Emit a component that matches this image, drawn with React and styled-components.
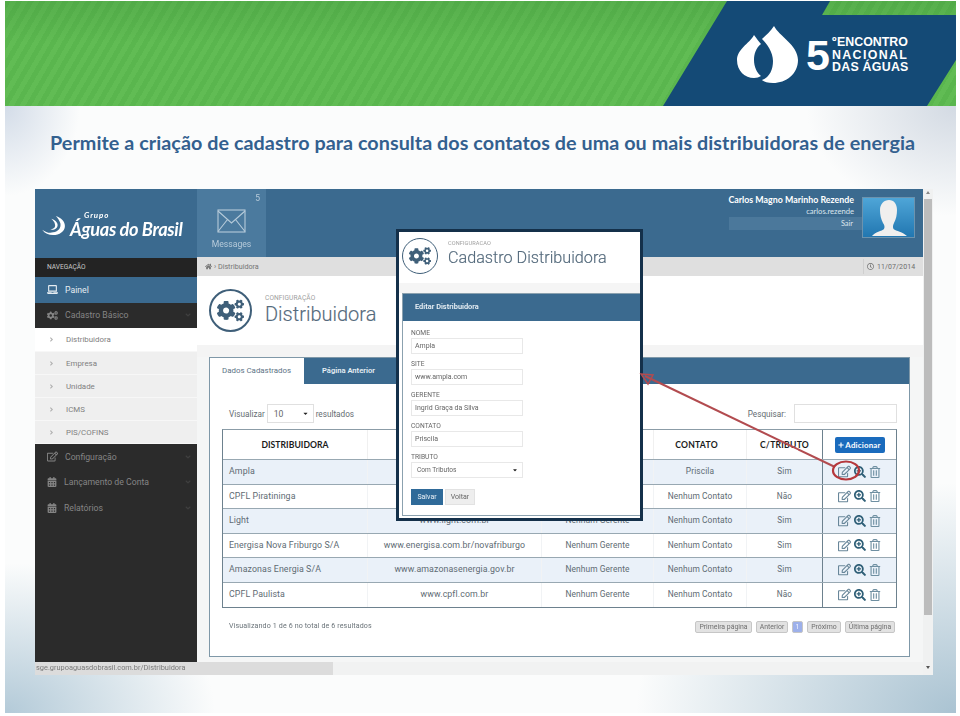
import React from "react";
import styled, { createGlobalStyle } from "styled-components";
import { FaLaptop, FaCogs, FaRegEdit, FaCalendarAlt, FaHome, FaRegClock, FaSearchPlus, FaRegTrashAlt, FaAngleRight, FaAngleDown, FaCaretDown, FaPlus } from "react-icons/fa";

const Global = createGlobalStyle`
  html, body { margin: 0; padding: 0; background: #fff; }
  * { box-sizing: border-box; }
  body { font-family: "Roboto", "Liberation Sans", sans-serif; width: 960px; height: 716px; overflow: hidden; }
`;

const Slide = styled.div`
  position: relative;
  margin: 1px 0 0 5px;
  width: 951px;
  height: 712px;
  display: flex;
  flex-direction: column;
  background:
    radial-gradient(ellipse 75px 90px at 0 105px, #d3dce8, rgba(211,220,232,0) 100%),
    radial-gradient(ellipse 150px 110px at 100% 105px, #d3dae3, rgba(211,218,227,0) 100%),
    radial-gradient(ellipse 210px 150px at 0 100%, #b3cad8, rgba(179,202,216,0) 100%),
    radial-gradient(ellipse 320px 230px at 100% 100%, #aac3d2, rgba(170,195,210,0) 100%),
    #fbfcfc;
`;
const Banner = styled.div`
  position: relative;
  height: 105px;
  flex: none;
  background:
    linear-gradient(180deg, rgba(50,130,50,.22), rgba(50,130,50,0) 40%),
    repeating-linear-gradient(120deg, #5ab64e 0 5px, #61bc54 5px 10px);
`;
const BlueShape = styled.div`
  position: absolute;
  inset: 0;
  background: #144a76;
  clip-path: polygon(722px 0, 825px 0, 817px 14px, 951px 14px, 951px 59px, 922px 105px, 658px 105px);
`;
const LogoRow = styled.div`
  position: absolute;
  left: 732px;
  top: 24px;
  display: flex;
  align-items: center;
`;
const Five = styled.span`
  font: 700 43px/44px "Liberation Sans", sans-serif;
  color: #fff;
  margin-left: 7px;
  width: 24px;
  letter-spacing: -1px;
`;
const LogoLines = styled.div`
  margin-left: 2px;
  display: flex;
  flex-direction: column;
  color: #fff;
  font: 700 12.4px/12.5px "Liberation Sans", sans-serif;
`;
const LogoLine = styled.span`
  letter-spacing: ${p => p.$sp || 0}px;
  word-spacing: ${p => p.$ws || 0}px;
  white-space: nowrap;
`;
const TitleBlock = styled.div`
  height: 83px;
  flex: none;
  padding: 25px 0 0 45px;
`;
const Title = styled.h1`
  margin: 0;
  font: 700 19.75px/24px "Lato", sans-serif;
  color: #33608f;
  white-space: nowrap;
  letter-spacing: .05px;
`;
const Shot = styled.div`
  position: relative;
  margin-left: 30px;
  width: 898px;
  height: 486px;
  display: flex;
  filter: blur(.35px);
`;
const ShotLeft = styled.div`
  width: 888px;
  display: flex;
  flex-direction: column;
`;
const ShotRow = styled.div`
  height: 473px;
  display: flex;
`;
const StatusBar = styled.div`
  height: 13px;
  background: #f1f2f2;
`;
const StatusText = styled.div`
  width: 298px;
  height: 13px;
  background: #dcdcdc;
  color: #7a7a7a;
  font-size: 7.4px;
  line-height: 12px;
  padding-left: 1px;
`;
const Scroll = styled.div`
  width: 10px;
  background: #f0f1f1;
  display: flex;
  flex-direction: column;
  align-items: center;
  justify-content: space-between;
  padding: 2px 0 0;
`;
const ScrollThumb = styled.div`
  width: 8px;
  height: 416px;
  margin-top: 5px;
  background: #bcbcbc;
`;
const ScrollArrow = styled.div`
  width: 0;
  height: 0;
  border-left: 2.5px solid transparent;
  border-right: 2.5px solid transparent;
  ${p => p.$down ? "border-top: 3px solid #555;" : "border-bottom: 3px solid #888;"}
`;
const ScrollTrack = styled.div`
  flex: 1;
  display: flex;
  flex-direction: column;
  align-items: center;
`;
const ScrollEnd = styled.div`
  height: 9px;
`;

const Sidebar = styled.aside`
  width: 162px;
  flex: none;
  background: #2b2b2b;
  display: flex;
  flex-direction: column;
`;
const Brand = styled.div`
  height: 69px;
  background: #3b6a8f;
  display: flex;
  align-items: center;
  padding: 5px 0 0 7px;
`;
const BrandText = styled.div`
  position: relative;
  margin: -2px 0 0 4px;
  color: #fff;
  font: italic 700 18.2px/16px "Lato", sans-serif;
  letter-spacing: -.35px;
  white-space: nowrap;
  padding-top: 8px;
`;
const BrandSmall = styled.span`
  position: absolute;
  left: 14px;
  top: -1px;
  font: italic 700 7.9px/7px "Lato", sans-serif;
  letter-spacing: .9px;
`;
const NavHead = styled.div`
  height: 19px;
  background: #232323;
  color: #c9c9c9;
  font-size: 6.6px;
  line-height: 19px;
  padding-left: 12px;
`;
const NavItem = styled.div`
  height: ${p => p.$h || 25.5}px;
  display: flex;
  align-items: center;
  padding: 0 5px 0 12px;
  gap: 7px;
  font-size: 8.7px;
  background: ${p => p.$active ? "#3b6a8f" : "transparent"};
  color: ${p => p.$active ? "#e6edf2" : "#858585"};
  svg { flex: none; }
`;
const NavLabel = styled.span`
  flex: 1;
`;
const Chev = styled(FaAngleDown)`
  color: #3f3f3f;
`;
const SubItem = styled.div`
  height: ${p => p.$h || 23}px;
  display: flex;
  align-items: center;
  padding-left: 13px;
  gap: 11px;
  font-size: 7.9px;
  color: #808080;
  background: ${p => p.$active ? "#fff" : "#efefef"};
  border-bottom: 1px solid #f7f7f7;
  svg { color: #b0b0b0; }
`;

const Content = styled.main`
  width: 726px;
  flex: none;
  display: flex;
  flex-direction: column;
  background: #f5f6f6;
`;
const TopBar = styled.div`
  height: 69px;
  background: #3b6a8f;
  display: flex;
`;
const Messages = styled.div`
  width: 69px;
  background: #4b7a9e;
  display: flex;
  flex-direction: column;
  align-items: center;
  color: #b7cbda;
  position: relative;
  padding-top: 20px;
`;
const MsgCount = styled.span`
  position: absolute;
  right: 6px;
  top: 4px;
  font-size: 8.5px;
`;
const MsgLabel = styled.span`
  font-size: 8.6px;
  margin-top: 6px;
`;
const UserArea = styled.div`
  flex: 1;
  display: flex;
  justify-content: flex-end;
  padding: 8px 8px 0 0;
  gap: 8px;
`;
const UserInfo = styled.div`
  width: 125px;
  margin-top: -2px;
  display: flex;
  flex-direction: column;
  align-items: flex-end;
  color: #fff;
`;
const UserName = styled.div`
  font: 700 8.85px/10px "Lato", sans-serif;
  white-space: nowrap;
  margin-bottom: 1px;
`;
const UserLogin = styled.div`
  font: 400 7.6px/11px "Lato", sans-serif;
  color: #dbe6ee;
`;
const SignOut = styled.div`
  width: 133px;
  height: 13px;
  margin: 0 -8px 0 0;
  padding-right: 9px;
  align-self: flex-end;
  background: #4b789b;
  text-align: right;
  font: 400 7.4px/13px "Lato", sans-serif;
  color: #dbe6ee;
`;
const Crumbs = styled.div`
  height: 19px;
  background: #dfdfdf;
  display: flex;
  align-items: center;
  padding-left: 8px;
  color: #757575;
  font-size: 7.2px;
  gap: 2px;
`;
const CrumbText = styled.span`
  flex: 1;
`;
const DateBox = styled.div`
  width: 60px;
  height: 15px;
  border-left: 1px solid #cfcfcf;
  display: flex;
  align-items: center;
  padding-left: 3px;
  gap: 3px;
  font-size: 7px;
  letter-spacing: .1px;
  color: #6d6d6d;
`;
const Head = styled.div`
  height: ${p => p.$h}px;
  background: #fff;
  display: flex;
  align-items: ${p => p.$small ? "flex-start" : "center"};
  padding: ${p => p.$small ? "6px 0 0 3px" : "0 0 0 12px"};
  gap: ${p => p.$small ? 10 : 13}px;
  flex: none;
`;
const Badge = styled.div`
  width: ${p => p.$s}px;
  height: ${p => p.$s}px;
  flex: none;
  border-radius: 50%;
  border: ${p => p.$s > 40 ? 2 : 1.5}px solid #3f5f79;
  display: flex;
  align-items: center;
  justify-content: center;
  color: #3f5f79;
`;
const HeadKicker = styled.div`
  font-size: ${p => p.$small ? 5.6 : 6.6}px;
  line-height: 8px;
  color: #a0a0a0;
  letter-spacing: .1px;
`;
const HeadTitle = styled.div`
  font-weight: 300;
  font-size: ${p => p.$small ? 16.2 : 20}px;
  line-height: ${p => p.$small ? 18 : 25}px;
  color: #546a7c;
  margin-top: ${p => p.$small ? 2 : 0}px;
  white-space: nowrap;
  -webkit-text-stroke: .15px #546a7c;
`;
const HeadText = styled.div`
  margin-top: ${p => p.$small ? 1 : 0}px;
`;
const Band = styled.div`
  height: 12px;
  flex: none;
  background: #f4f4f4;
`;
const PanelWrap = styled.div`
  flex: 1;
  padding: 0 13px 5px 12px;
`;
const Panel = styled.section`
  height: 300px;
  background: #fff;
  border: 1px solid #7f98a8;
  display: flex;
  flex-direction: column;
`;
const Tabs = styled.div`
  height: 26px;
  background: #3b6a8f;
  display: flex;
  flex: none;
`;
const Tab = styled.div`
  width: ${p => p.$w}px;
  background: ${p => p.$active ? "#fff" : "transparent"};
  color: ${p => p.$active ? "#5c7385" : "#e6eef4"};
  font-weight: ${p => p.$active ? 400 : 600};
  font-size: ${p => p.$active ? 7.9 : 7.6}px;
  line-height: 25px;
  text-align: ${p => p.$active ? "left" : "center"};
  padding-left: ${p => p.$active ? 12 : 0}px;
`;
const Controls = styled.div`
  height: 45px;
  flex: none;
  display: flex;
  align-items: flex-end;
  padding: 0 12px 6px 19px;
  color: #656d72;
  font-size: 8.2px;
`;
const Ctl = styled.div`
  display: flex;
  align-items: center;
  gap: 2px;
  flex: 1;
`;
const SelectBox = styled.div`
  width: ${p => p.$w}px;
  height: ${p => p.$h || 19}px;
  border: 1px solid ${p => p.$light ? "#e8e8e8" : "#e0e0e0"};
  background: #fff;
  display: flex;
  align-items: center;
  justify-content: space-between;
  padding: ${p => p.$pad || "0 4px 0 6px"};
  font-size: ${p => p.$fs || 8.6}px;
  color: #666;
  white-space: nowrap;
  svg { color: #222; }
`;
const SearchField = styled.div`
  display: flex;
  align-items: center;
  gap: 8px;
`;
const Table = styled.div`
  margin-left: 12px;
  width: 675px;
  border: 1px solid #6d818e;
  border-top-color: #8b9ca7;
  flex: none;
`;
const TRow = styled.div`
  display: grid;
  grid-template-columns: 145px 174px 112px 93px 76px 1fr;
  height: ${p => p.$h || 24.5}px;
  background: ${p => p.$alt ? "#eaf1f9" : "#fff"};
  border-bottom: ${p => p.$last ? 0 : 1.5}px solid #98a8b2;
`;
const Th = styled.div`
  display: flex;
  align-items: center;
  justify-content: center;
  padding-right: ${p => p.$pr || 0}px;
  font: 700 8.6px "Lato", sans-serif;
  letter-spacing: ${p => p.$sp ?? .05}px;
  color: #1b1b1b;
  border-right: 1px solid #f0f0f0;
`;
const Td = styled.div`
  display: flex;
  align-items: center;
  justify-content: ${p => p.$left ? "flex-start" : "center"};
  padding: 0 0 1.5px ${p => p.$left ? 6 : 0}px;
  font-size: ${p => p.$fs || 8.8}px;
  color: #606b73;
  letter-spacing: .1px;
  border-right: 1px solid #f1f3f5;
  white-space: nowrap;
`;
const ActionCell = styled.div`
  display: flex;
  align-items: center;
  justify-content: center;
  gap: 3px;
  border-left: 1px solid #6d818e;
  margin-left: -1px;
`;
const Tone = styled.span`
  display: flex;
  color: ${p => p.$c};
`;
const AddButton = styled.div`
  height: 16px;
  width: 50px;
  background: #1a6bbd;
  border-radius: 2px;
  color: #fff;
  font: 700 7.9px/16px "Lato", sans-serif;
  display: flex;
  align-items: center;
  justify-content: center;
  gap: 1px;
  letter-spacing: .2px;
`;
const Footer = styled.div`
  flex: 1;
  display: flex;
  justify-content: space-between;
  align-items: flex-start;
  padding: 13px 14px 0 19px;
  font-size: 7.1px;
  color: #6a7379;
  letter-spacing: .12px;
`;
const Pager = styled.div`
  display: flex;
  gap: 4px;
`;
const PageBtn = styled.div`
  width: ${p => p.$w}px;
  height: 12px;
  border: 1px solid #c6c6c6;
  border-radius: 2px;
  background: ${p => p.$on ? "#9db0ea" : "#e2e2e2"};
  color: ${p => p.$on ? "#f4f6ff" : "#6f6f6f"};
  font-size: 6.9px;
  line-height: 10px;
  text-align: center;
  letter-spacing: 0;
`;
const Modal = styled.div`
  position: absolute;
  left: 361px;
  top: 40px;
  width: 247px;
  height: 292px;
  background: #fff;
  border: 3px solid #14304a;
  display: flex;
  flex-direction: column;
`;
const ModalBand = styled.div`
  height: 10px;
  background: #f5f5f5;
  flex: none;
`;
const ModalPanel = styled.div`
  margin: 0 0 2px 3px;
  flex: 1;
  border: 1px solid #8ba1af;
  border-right: 0;
`;
const ModalHead = styled.div`
  height: 27px;
  background: #3b6a8f;
  color: #eaf1f6;
  font-weight: 600;
  font-size: 7.4px;
  line-height: 26px;
  padding-left: 12px;
`;
const ModalBody = styled.div`
  padding: 8px 0 0 8px;
  display: flex;
  flex-direction: column;
`;
const Label = styled.div`
  font-size: 6.7px;
  line-height: 8px;
  color: #666;
  margin: ${p => p.$first ? 0 : 6}px 0 1px;
`;
const Buttons = styled.div`
  display: flex;
  gap: 2px;
  margin-top: 11px;
`;
const Btn = styled.div`
  width: ${p => p.$w}px;
  height: 16px;
  background: ${p => p.$primary ? "#2f6a99" : "#eeeeee"};
  border: 1px solid ${p => p.$primary ? "#2f6a99" : "#e2e2e2"};
  color: ${p => p.$primary ? "#e9f0f6" : "#666"};
  font-size: 7px;
  line-height: 14px;
  text-align: center;
`;
const Annot = styled.svg`
  position: absolute;
  left: 0;
  top: 0;
  width: 898px;
  height: 486px;
  pointer-events: none;
`;

function Drops() {
  return (
    <svg width="62" height="60" viewBox="737 24 62 60" fill="#fff">
      <path d="M774 25C779 35 798 44 798 59C798 73 786 82 773 82C768 82 764 81 762 79C770 76 773 68 773 60C773 51 767 43 762 38C766 34 771 30 774 25Z" />
      <path d="M754 34C757 38 759 41 761 43C756 47 754 53 754 59C754 66 757 72 761 75C759 76 757 77 754 77C745 77 737 70 737 59C737 48 749 43 754 34Z" />
    </svg>
  );
}
function Swoosh() {
  return (
    <svg width="24" height="20" viewBox="0 0 26 22" fill="#fff">
      <path d="M15 0C21 2 25 6 25 11C25 17 19 21 12 21C7 21 3 19 0 15C4 18 8 19 12 18C18 17 21 13 20 8C19 5 17 2 15 0Z" />
      <path d="M10 3C14 4 17 7 17 10C17 14 13 16 9 15C13 14 15 12 14 9C14 7 12 5 10 3Z" />
    </svg>
  );
}
function Envelope() {
  return (
    <svg width="29" height="24" viewBox="0 0 29 24" fill="none" stroke="currentColor" strokeWidth="1.1">
      <rect x="1" y="1" width="27" height="22" />
      <path d="M1 2L14.500 14L28 2M1 22.500L10.500 10.500M28 22.500L18.500 10.500" />
    </svg>
  );
}
function Avatar() {
  return (
    <svg width="53" height="41" viewBox="0 0 53 41">
      <defs>
        <linearGradient id="av" x1="0" y1="0" x2="0" y2="1">
          <stop offset="0" stopColor="#4fa6d8" />
          <stop offset="1" stopColor="#2176b0" />
        </linearGradient>
      </defs>
      <rect x=".5" y=".5" width="52" height="40" fill="url(#av)" stroke="#6c93ae" />
      <path d="M10 39C13 35 20 34 22 32C23 30 22.5 28 21 26C19 22 18 18 18 13C18 7 22 3 27 3C32 3 35 7 35 13C35 18 34 22 32 26C31 28 30.500 30 31.500 32C34 34 41 35 45 39Z" fill="#f0efee" />
    </svg>
  );
}
const rows = [
  ["Ampla", "", "", "Priscila", "Sim"],
  ["CPFL Piratininga", "", "", "Nenhum Contato", "Não"],
  ["Light", "www.light.com.br", "Nenhum Gerente", "Nenhum Contato", "Sim"],
  ["Energisa Nova Friburgo S/A", "www.energisa.com.br/novafriburgo", "Nenhum Gerente", "Nenhum Contato", "Sim"],
  ["Amazonas Energia S/A", "www.amazonasenergia.gov.br", "Nenhum Gerente", "Nenhum Contato", "Sim"],
  ["CPFL Paulista", "www.cpfl.com.br", "Nenhum Gerente", "Nenhum Contato", "Não"],
];
const fields = [["NOME", "Ampla"], ["SITE", "www.ampla.com"], ["GERENTE", "Ingrid Graça da Silva"], ["CONTATO", "Priscila"]];

export default function App() {
  return (
    <>
      <Global />
      <Slide>
        <Banner>
          <BlueShape />
          <LogoRow>
            <Drops />
            <Five>5</Five>
            <LogoLines>
              <LogoLine $ws={-3}>º ENCONTRO</LogoLine>
              <LogoLine $sp={1.35}>NACIONAL</LogoLine>
              <LogoLine $sp={.25}>DAS ÁGUAS</LogoLine>
            </LogoLines>
          </LogoRow>
        </Banner>
        <TitleBlock>
          <Title>Permite a criação de cadastro para consulta dos contatos de uma ou mais distribuidoras de energia</Title>
        </TitleBlock>
        <Shot>
          <ShotLeft>
            <ShotRow>
              <Sidebar>
                <Brand>
                  <Swoosh />
                  <BrandText>
                    <BrandSmall>Grupo</BrandSmall>
                    Águas do Brasil
                  </BrandText>
                </Brand>
                <NavHead>NAVEGAÇÃO</NavHead>
                <NavItem $active><FaLaptop size={11} /><NavLabel>Painel</NavLabel></NavItem>
                <NavItem><FaCogs size={11} /><NavLabel>Cadastro Básico</NavLabel><Chev size={8} /></NavItem>
                <SubItem $active $h={24}><FaAngleRight size={7} />Distribuidora</SubItem>
                <SubItem><FaAngleRight size={7} />Empresa</SubItem>
                <SubItem><FaAngleRight size={7} />Unidade</SubItem>
                <SubItem><FaAngleRight size={7} />ICMS</SubItem>
                <SubItem><FaAngleRight size={7} />PIS/COFINS</SubItem>
                <NavItem><FaRegEdit size={11} /><NavLabel>Configuração</NavLabel><Chev size={8} /></NavItem>
                <NavItem><FaCalendarAlt size={10} /><NavLabel>Lançamento de Conta</NavLabel><Chev size={8} /></NavItem>
                <NavItem><FaCalendarAlt size={10} /><NavLabel>Relatórios</NavLabel><Chev size={8} /></NavItem>
              </Sidebar>
              <Content>
                <TopBar>
                  <Messages>
                    <MsgCount>5</MsgCount>
                    <Envelope />
                    <MsgLabel>Messages</MsgLabel>
                  </Messages>
                  <UserArea>
                    <UserInfo>
                      <UserName>Carlos Magno Marinho Rezende</UserName>
                      <UserLogin>carlos.rezende</UserLogin>
                      <SignOut>Sair</SignOut>
                    </UserInfo>
                    <Avatar />
                  </UserArea>
                </TopBar>
                <Crumbs>
                  <FaHome size={7} />
                  <CrumbText>› Distribuidora</CrumbText>
                  <DateBox><FaRegClock size={7} />11/07/2014</DateBox>
                </Crumbs>
                <Head $h={69}>
                  <Badge $s={43}><FaCogs size={27} /></Badge>
                  <HeadText>
                    <HeadKicker>CONFIGURAÇÃO</HeadKicker>
                    <HeadTitle>Distribuidora</HeadTitle>
                  </HeadText>
                </Head>
                <Band />
                <PanelWrap>
                  <Panel>
                    <Tabs>
                      <Tab $active $w={94}>Dados Cadastrados</Tab>
                      <Tab $w={89}>Página Anterior</Tab>
                    </Tabs>
                    <Controls>
                      <Ctl>
                        Visualizar
                        <SelectBox $w={47}>10<FaCaretDown size={7} /></SelectBox>
                        resultados
                      </Ctl>
                      <SearchField>
                        Pesquisar:
                        <SelectBox $w={103} />
                      </SearchField>
                    </Controls>
                    <Table>
                      <TRow $h={30}>
                        <Th>DISTRIBUIDORA</Th>
                        <Th />
                        <Th />
                        <Th $pr={7} $sp={.25}>CONTATO</Th>
                        <Th $sp={.25}>C/TRIBUTO</Th>
                        <ActionCell>
                          <AddButton><FaPlus size={6} />Adicionar</AddButton>
                        </ActionCell>
                      </TRow>
                      {rows.map((r, i) => (
                        <TRow key={r[0]} $alt={i % 2 === 0} $last={i === rows.length - 1}>
                          <Td $left>{r[0]}</Td>
                          <Td>{r[1]}</Td>
                          <Td $fs={8.4}>{r[2]}</Td>
                          <Td $fs={8.4}>{r[3]}</Td>
                          <Td $fs={8.2}>{r[4]}</Td>
                          <ActionCell>
                            <Tone $c="#688699"><FaRegEdit size={13} /></Tone>
                            <Tone $c="#2f5f77"><FaSearchPlus size={12} /></Tone>
                            <Tone $c="#6f90a2"><FaRegTrashAlt size={12} /></Tone>
                          </ActionCell>
                        </TRow>
                      ))}
                    </Table>
                    <Footer>
                      <span>Visualizando 1 de 6 no total de 6 resultados</span>
                      <Pager>
                        <PageBtn $w={57}>Primeira página</PageBtn>
                        <PageBtn $w={32}>Anterior</PageBtn>
                        <PageBtn $w={11} $on>1</PageBtn>
                        <PageBtn $w={34}>Próximo</PageBtn>
                        <PageBtn $w={50}>Última página</PageBtn>
                      </Pager>
                    </Footer>
                  </Panel>
                </PanelWrap>
              </Content>
            </ShotRow>
            <StatusBar>
              <StatusText>sge.grupoaguasdobrasil.com.br/Distribuidora</StatusText>
            </StatusBar>
          </ShotLeft>
          <Scroll>
            <ScrollTrack>
              <ScrollArrow />
              <ScrollThumb />
            </ScrollTrack>
            <ScrollEnd><ScrollArrow $down /></ScrollEnd>
          </Scroll>
          <Modal>
            <Head $h={51} $small>
              <Badge $s={36}><FaCogs size={22} /></Badge>
              <HeadText $small>
                <HeadKicker $small>CONFIGURACAO</HeadKicker>
                <HeadTitle $small>Cadastro Distribuidora</HeadTitle>
              </HeadText>
            </Head>
            <ModalBand />
            <ModalPanel>
              <ModalHead>Editar Distribuidora</ModalHead>
              <ModalBody>
                {fields.map(([l, v], i) => (
                  <React.Fragment key={l}>
                    <Label $first={i === 0}>{l}</Label>
                    <SelectBox $w={112} $h={16} $fs={7} $pad="0 3px" $light>{v}</SelectBox>
                  </React.Fragment>
                ))}
                <Label>TRIBUTO</Label>
                <SelectBox $w={112} $h={16} $fs={6.6} $pad="0 4px 0 5px" $light>Com Tributos<FaCaretDown size={6} /></SelectBox>
                <Buttons>
                  <Btn $primary $w={32}>Salvar</Btn>
                  <Btn $w={30}>Voltar</Btn>
                </Buttons>
              </ModalBody>
            </ModalPanel>
          </Modal>
          <Annot viewBox="35 189 898 486">
            <line x1="645" y1="376" x2="835" y2="467" stroke="#b24b4f" strokeWidth="2" />
            <path d="M641 374L653 375L648 384Z" fill="none" stroke="#b24b4f" strokeWidth="1.500" />
            <ellipse cx="846" cy="470.500" rx="13" ry="9" fill="none" stroke="#b5383c" strokeWidth="2.200" />
          </Annot>
        </Shot>
      </Slide>
    </>
  );
}
